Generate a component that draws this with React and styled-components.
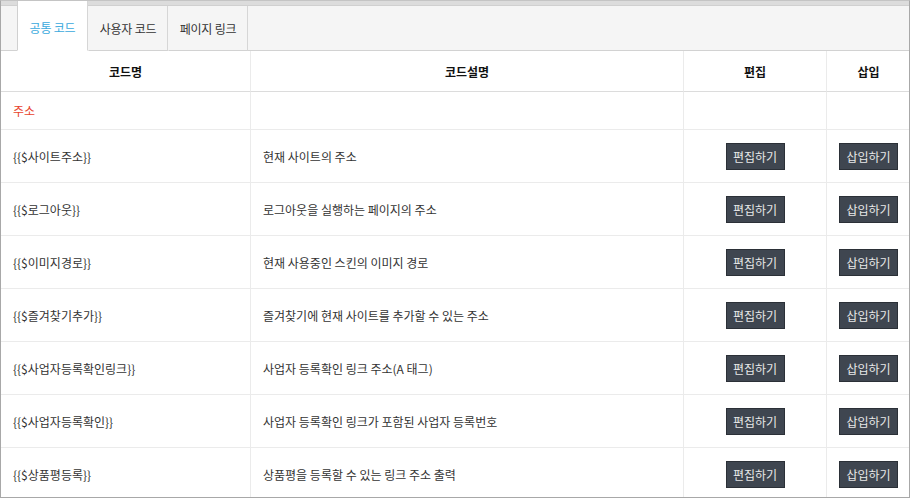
import React from 'react';
import styled, { createGlobalStyle } from 'styled-components';

const GlobalStyle = createGlobalStyle`
  html, body {
    margin: 0;
    padding: 0;
    background: #fff;
  }
  body {
    font-family: "Noto Sans CJK KR", "Noto Sans", sans-serif;
    font-size: 12px;
    color: #333;
  }
`;

const Frame = styled.div`
  box-sizing: border-box;
  width: 910px;
  height: 498px;
  overflow: hidden;
  border: 1px solid #a8a8a8;
  border-top-color: #c4c4c4;
  background: #fff;
`;

const TabBar = styled.div`
  display: flex;
  align-items: flex-end;
  height: 49px;
  padding-left: 16px;
  border-bottom: 1px solid #d2d2d2;
  background: linear-gradient(#dcdcdc 0 4px, #d0d0d0 4px 5px, #f5f5f5 5px);
`;

const Tab = styled.div`
  box-sizing: border-box;
  display: flex;
  align-items: center;
  justify-content: center;
  width: ${(p) => p.$width}px;
  height: ${(p) => (p.$active ? 50 : 45)}px;
  margin-bottom: -1px;
  padding-top: ${(p) => (p.$active ? 3 : 0)}px;
  border-left: 1px solid ${(p) => (p.$active ? '#d0d0d0' : 'transparent')};
  border-right: 1px solid #d6d6d6;
  border-bottom: 1px solid ${(p) => (p.$active ? '#fff' : '#d2d2d2')};
  background: ${(p) => (p.$active ? '#fff' : '#f5f5f5')};
  color: ${(p) => (p.$active ? '#3aa9dd' : '#333')};
  letter-spacing: -0.2px;
`;

const Grid = styled.div`
  display: grid;
  grid-template-columns: 250px 433px 143px 1fr;
`;

const Cell = styled.div`
  box-sizing: border-box;
  display: flex;
  align-items: center;
  justify-content: ${(p) => (p.$center ? 'center' : 'flex-start')};
  height: ${(p) => p.$h}px;
  padding: 0 12px;
  border-bottom: 1px solid ${(p) => (p.$head ? '#dcdcdc' : '#ebebeb')};
  border-right: ${(p) => (p.$last ? 'none' : '1px solid #ebebeb')};
  font-weight: ${(p) => (p.$head ? 700 : 400)};
  color: ${(p) => (p.$head ? '#111' : p.$red ? '#e8432d' : '#333')};
  white-space: nowrap;
`;

const ActionButton = styled.button`
  box-sizing: border-box;
  width: ${(p) => p.$width}px;
  height: 27px;
  padding: 0;
  border: 1px solid #2b3037;
  background: #3f4650;
  color: #e8e8e8;
  font-family: inherit;
  font-size: 12px;
  cursor: pointer;
`;

const rows = [
  ['{{$사이트주소}}', '현재 사이트의 주소'],
  ['{{$로그아웃}}', '로그아웃을 실행하는 페이지의 주소'],
  ['{{$이미지경로}}', '현재 사용중인 스킨의 이미지 경로'],
  ['{{$즐겨찾기추가}}', '즐겨찾기에 현재 사이트를 추가할 수 있는 주소'],
  ['{{$사업자등록확인링크}}', '사업자 등록확인 링크 주소(A 태그)'],
  ['{{$사업자등록확인}}', '사업자 등록확인 링크가 포함된 사업자 등록번호'],
  ['{{$상품평등록}}', '상품평을 등록할 수 있는 링크 주소 출력'],
];

export default function App() {
  return (
    <>
      <GlobalStyle />
      <Frame>
        <TabBar>
          <Tab $active $width={71}>공통 코드</Tab>
          <Tab $width={80}>사용자 코드</Tab>
          <Tab $width={80}>페이지 링크</Tab>
        </TabBar>
        <Grid>
          <Cell $head $center $h={41}>코드명</Cell>
          <Cell $head $center $h={41}>코드설명</Cell>
          <Cell $head $center $h={41}>편집</Cell>
          <Cell $head $center $last $h={41}>삽입</Cell>

          <Cell $red $h={38}>주소</Cell>
          <Cell $h={38} />
          <Cell $h={38} />
          <Cell $last $h={38} />

          {rows.map(([code, desc]) => (
            <React.Fragment key={code}>
              <Cell $h={53}>{code}</Cell>
              <Cell $h={53}>{desc}</Cell>
              <Cell $center $h={53}>
                <ActionButton $width={59}>편집하기</ActionButton>
              </Cell>
              <Cell $center $last $h={53}>
                <ActionButton $width={59}>삽입하기</ActionButton>
              </Cell>
            </React.Fragment>
          ))}
        </Grid>
      </Frame>
    </>
  );
}
